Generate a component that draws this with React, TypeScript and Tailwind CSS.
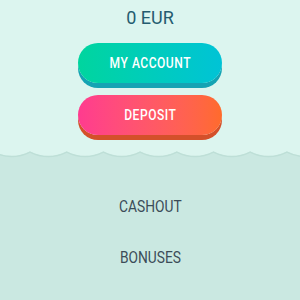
const waveD = (() => {
  // sine-like wave, period ~36.7px
  const period = 36.7;
  const start = 30 - period * 1.5;
  let d = `M${start} 156`;
  for (let x = start; x < 340; x += period) {
    d += ` Q${x + period / 4} 156 ${x + period / 2} 151.5`;
    d += ` Q${x + (3 * period) / 4} 156 ${x + period} 156`;
  }
  return d;
})();

function Wave() {
  return (
    <svg width="300" height="12" viewBox="0 146 300 12" className="block bg-[#dcf5ef]">
      <path d={`${waveD} L340 160 L-30 160 Z`} fill="#cae8e1" />
      <path d={waveD} fill="none" stroke="#bedfd7" strokeWidth="1.5" transform="translate(0 0.6)" />
    </svg>
  );
}

export default function App() {
  const cond = "inline-block scale-x-[0.86]";
  return (
    <div className="w-[300px] h-[300px] overflow-hidden bg-[#cae8e1] font-['Roboto',sans-serif]">
      <div className="bg-[#dcf5ef] flex flex-col items-center pt-[7px] h-[146px]">
        <div className="text-[18px] leading-[22px] text-[#245c70]">0 EUR</div>
        <button className="mt-[14px] w-[144px] h-[40px] rounded-full bg-linear-to-r from-[#00d59e] to-[#00c3d6] shadow-[0_5px_0_#15a3b3] text-white text-[14px] font-medium tracking-[0.6px]">
          <span className={cond}>MY ACCOUNT</span>
        </button>
        <button className="mt-[12px] w-[144px] h-[40px] rounded-full bg-linear-to-r from-[#ff3b8f] to-[#ff6b2b] shadow-[0_5px_0_#d4502a] text-white text-[14px] font-medium tracking-[0.6px]">
          <span className={cond}>DEPOSIT</span>
        </button>
      </div>
      <Wave />
      <nav className="flex flex-col items-center pt-[38px] gap-[29px] text-[16px] leading-[22px] text-[#3b4c58]">
        <a className="cursor-pointer"><span className={cond}>CASHOUT</span></a>
        <a className="cursor-pointer"><span className={cond}>BONUSES</span></a>
      </nav>
    </div>
  );
}
